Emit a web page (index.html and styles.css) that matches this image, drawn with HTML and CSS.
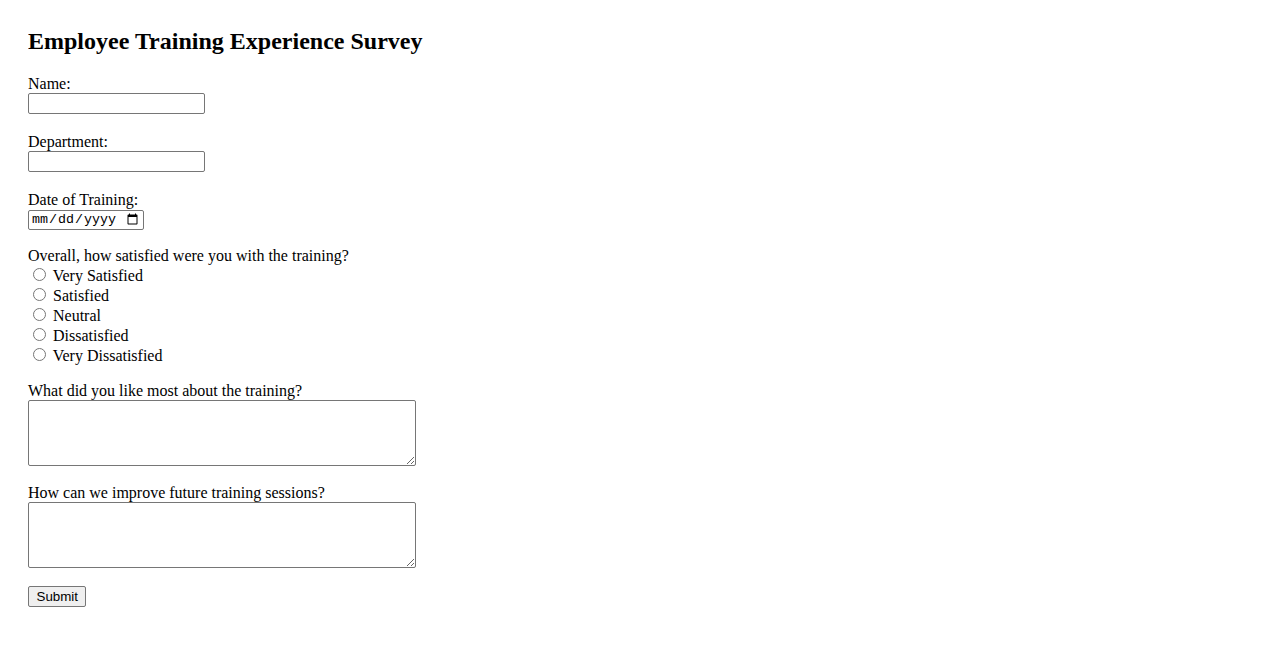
FILE: index.html
```html
<!DOCTYPE html>
<html lang="en">
<head>
<meta charset="utf-8">
<title>Employee Training Experience Survey</title>
<link rel="stylesheet" href="styles.css">
</head>
<body>
<h2 class="title">Employee Training Experience Survey</h2>
<form class="survey">
  <div class="field field--text">
    <label for="name">Name:</label><br>
    <input class="text-input" type="text" id="name" name="name">
  </div>
  <div class="field field--text">
    <label for="dept">Department:</label><br>
    <input class="text-input" type="text" id="dept" name="dept">
  </div>
  <div class="field field--date">
    <label for="date">Date of Training:</label><br>
    <input class="date-input" type="date" id="date" name="date">
  </div>
  <div class="field field--radio">
    <label>Overall, how satisfied were you with the training?</label><br>
    <input class="radio" type="radio" name="sat" value="vs"> Very Satisfied<br>
    <input class="radio" type="radio" name="sat" value="s"> Satisfied<br>
    <input class="radio" type="radio" name="sat" value="n"> Neutral<br>
    <input class="radio" type="radio" name="sat" value="d"> Dissatisfied<br>
    <input class="radio" type="radio" name="sat" value="vd"> Very Dissatisfied
  </div>
  <div class="field">
    <label for="like">What did you like most about the training?</label><br>
    <textarea class="area" id="like" name="like"></textarea>
  </div>
  <div class="field">
    <label for="improve">How can we improve future training sessions?</label><br>
    <textarea class="area" id="improve" name="improve"></textarea>
  </div>
  <button class="submit" type="submit">Submit</button>
</form>
</body>
</html>
```
FILE: styles.css
```css
body {
  margin: 28px;
  font-family: "Liberation Serif", "Times New Roman", serif;
  font-size: 16px;
  color: #000;
  background: #fff;
}
.title {
  font-size: 24px;
  font-weight: bold;
  margin: 0 0 20px 0;
}
.field {
  margin-bottom: 18px;
}
.field--text {
  margin-bottom: 19px;
}
.field--date {
  margin-bottom: 17px;
}
.field--radio {
  margin-bottom: 17px;
}
.text-input {
  box-sizing: border-box;
  width: 177px;
  height: 21px;
  border: 1px solid #767676;
  border-radius: 2px;
  padding: 1px 2px;
  font-family: "Liberation Sans", Arial, sans-serif;
  font-size: 13.33px;
  margin: 0;
}
.date-input {
  box-sizing: border-box;
  width: 116px;
  height: 20px;
  border: 1px solid #767676;
  border-radius: 2px;
  padding: 0 2px;
  font-family: "Liberation Mono", "Courier New", monospace;
  font-size: 13.33px;
  margin: 0;
}
.radio {
  margin: 3px 3px 0 5px;
}
.area {
  box-sizing: border-box;
  width: 388px;
  height: 66px;
  border: 1px solid #767676;
  border-radius: 2px;
  margin: 0;
  font-family: "Liberation Mono", monospace;
  font-size: 13.33px;
  vertical-align: bottom;
}
.submit {
  box-sizing: border-box;
  height: 21px;
  padding: 1px 7.5px;
  font-family: "Liberation Sans", Arial, sans-serif;
  font-size: 13.33px;
  border: 1px solid #767676;
  border-radius: 2px;
  background: #efefef;
  color: #000;
}
```
